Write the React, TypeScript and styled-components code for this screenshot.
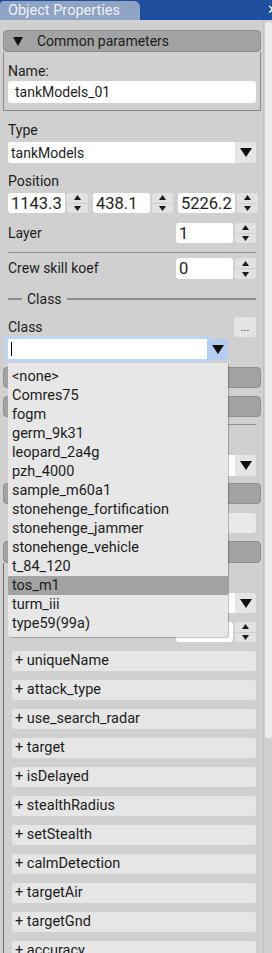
import React from "react";
import styled, { createGlobalStyle } from "styled-components";

const GlobalStyle = createGlobalStyle`
  html, body { margin: 0; padding: 0; background: #d0d0d0; }
  body { font-family: Roboto, "Liberation Sans", sans-serif; overflow: hidden; }
  * { box-sizing: border-box; }
`;

const Window = styled.div`
  width: 272px;
  height: 953px;
  display: flex;
  flex-direction: column;
  overflow: hidden;
  background: #d0d0d0;
  color: #1e1e1e;
  font-size: 14px;
`;

const TitleBar = styled.div`
  height: 20px;
  flex: none;
  background: #1f4e9c;
  display: flex;
  align-items: flex-end;
  justify-content: space-between;
  overflow: hidden;
`;

const Tab = styled.div`
  width: 140px;
  height: 19px;
  padding-left: 8px;
  background: #8fa3c4;
  border-radius: 4px 6px 0 0;
  color: #eef2f8;
  font-size: 14.5px;
  line-height: 19px;
`;

const Close = styled.span`
  align-self: center;
  color: #ffffff;
  font-size: 13px;
  line-height: 20px;
  margin-right: -6px;
`;

const Main = styled.div`
  flex: 1;
  display: flex;
  min-height: 0;
`;

const Content = styled.div`
  width: 263px;
  flex: none;
  padding: 10px 2px 0 3px;
  display: flex;
  flex-direction: column;
`;

const ScrollTrack = styled.div`
  flex: 1;
  border-left: 1px solid #c2c2c2;
  padding: 2px 0 0 1px;
  background: #d0d0d0;
`;

const ScrollThumb = styled.div`
  height: 716px;
  background: #ededed;
  border-radius: 2px;
`;

const GroupHeader = styled.div<{ $mt?: number; $h?: number }>`
  flex: none;
  height: ${(p) => p.$h ?? 21}px;
  margin-top: ${(p) => p.$mt ?? 0}px;
  background: #a2a2a2;
  border: 1px solid #8f8f8f;
  border-radius: 4px;
  display: flex;
  align-items: center;
  padding-left: 9px;
  gap: 14px;
  font-size: 14px;
  color: #1c1c1c;
`;

const GroupBody = styled.div`
  border: 1px solid #8a8a8a;
  border-top: none;
  padding: 10px 4px 7px;
`;

const OpenBody = styled.div`
  flex: 1;
  border-left: 1px solid #6e6e6e;
  padding: 0 5px 0 4px;
  display: flex;
  flex-direction: column;
`;

const Fields = styled.div`
  padding: 0 5px;
  display: flex;
  flex-direction: column;
`;

const Label = styled.div<{ $mt?: number }>`
  height: 19px;
  line-height: 19px;
  margin-top: ${(p) => p.$mt ?? 0}px;
  font-size: 14px;
  color: #1e1e1e;
  white-space: nowrap;
`;

const TextInput = styled.div<{ $mt?: number; $disabled?: boolean }>`
  height: ${(p) => (p.$disabled ? 20 : 22)}px;
  margin-top: ${(p) => p.$mt ?? 0}px;
  background: ${(p) => (p.$disabled ? "#e9e9e9" : "#ffffff")};
  border-radius: 3px;
  padding-left: 7px;
  line-height: 22px;
  font-size: 14px;
`;

const SelectBox = styled.div<{ $mt?: number; $h?: number }>`
  height: ${(p) => p.$h ?? 21}px;
  margin-top: ${(p) => p.$mt ?? 0}px;
  display: flex;
  border-radius: 3px;
  overflow: hidden;
`;

const SelectValue = styled.div`
  flex: 1;
  background: #ffffff;
  padding-left: 3px;
  font-size: 14px;
  display: flex;
  align-items: center;
`;

const ArrowBox = styled.div<{ $focus?: boolean }>`
  width: 21px;
  flex: none;
  background: ${(p) => (p.$focus ? "#b3cef2" : "#e5e5e5")};
  display: flex;
  align-items: center;
  justify-content: center;
`;

const Down = ({ w = 12, h = 9 }: { w?: number; h?: number }) => (
  <svg width={w} height={h} viewBox={`0 0 ${w} ${h}`}>
    <polygon points={`0,0 ${w},0 ${w / 2},${h}`} fill="#111" />
  </svg>
);

const SpinRowBox = styled.div<{ $mt?: number }>`
  margin-top: ${(p) => p.$mt ?? 0}px;
  display: flex;
  gap: 5px;
`;

const Spin = styled.div<{ $h?: number }>`
  display: flex;
  gap: 2px;
  height: ${(p) => p.$h ?? 20}px;
`;

const SpinInput = styled.div`
  width: 57px;
  background: #ffffff;
  border-radius: 3px;
  padding-left: 3px;
  font-size: 16.5px;
  display: flex;
  align-items: center;
`;

const SpinButtons = styled.div`
  width: 21px;
  display: flex;
  flex-direction: column;
  gap: 1px;
`;

const SpinHalf = styled.div<{ $up?: boolean }>`
  flex: 1;
  background: #e2e2e2;
  border-radius: ${(p) => (p.$up ? "3px 3px 0 0" : "0 0 3px 3px")};
  display: flex;
  align-items: center;
  justify-content: center;
`;

const Tri = ({ up }: { up?: boolean }) => (
  <svg width="7" height="5" viewBox="0 0 7 5">
    <polygon points={up ? "0,5 7,5 3.5,0" : "0,0 7,0 3.5,5"} fill="#1a1a1a" />
  </svg>
);

const SpinBox = ({ value, h }: { value: string; h?: number }) => (
  <Spin $h={h}>
    <SpinInput>{value}</SpinInput>
    <SpinButtons>
      <SpinHalf $up>
        <Tri up />
      </SpinHalf>
      <SpinHalf>
        <Tri />
      </SpinHalf>
    </SpinButtons>
  </Spin>
);

const Row = styled.div<{ $mt?: number; $h: number }>`
  margin-top: ${(p) => p.$mt ?? 0}px;
  height: ${(p) => p.$h}px;
  display: flex;
  align-items: center;
  justify-content: space-between;
`;

const Separator = styled.div<{ $mt?: number }>`
  margin-top: ${(p) => p.$mt ?? 0}px;
  height: 1px;
  background: #8f8f8f;
`;

const SectionTitle = styled.div<{ $mt?: number }>`
  margin-top: ${(p) => p.$mt ?? 0}px;
  height: 18px;
  display: flex;
  align-items: center;
  gap: 5px;
  font-size: 14px;
  &::before {
    content: "";
    width: 14px;
    height: 2px;
    background: #8c8c8c;
  }
  &::after {
    content: "";
    flex: 1;
    height: 2px;
    background: #8c8c8c;
  }
`;

const DotsButton = styled.div`
  width: 22px;
  height: 20px;
  background: #e4e4e4;
  border-radius: 3px;
  font-size: 11px;
  text-align: center;
  line-height: 22px;
  color: #333;
`;

const ComboWrap = styled.div<{ $mt?: number }>`
  position: relative;
  margin-top: ${(p) => p.$mt ?? 0}px;
  width: 220px;
  height: 21px;
  display: flex;
`;

const ComboField = styled.div`
  width: 199px;
  height: 20px;
  background: #ffffff;
  box-shadow: 0 0 0 3px #bfd7f6;
  display: flex;
  align-items: center;
  padding-left: 3px;
`;

const Caret = styled.span`
  width: 1px;
  height: 14px;
  background: #000;
`;

const ComboArrow = styled(ArrowBox)`
  position: relative;
  height: 21px;
`;

const DropList = styled.ul`
  position: absolute;
  z-index: 10;
  top: 24px;
  left: 0;
  width: 220px;
  height: 274px;
  margin: 0;
  padding: 4px 0 0;
  list-style: none;
  background: #e7e7e7;
  box-shadow: 1px 1px 1px rgba(0, 0, 0, 0.25);
  border-radius: 0 0 3px 3px;
`;

const DropItem = styled.li<{ $active?: boolean }>`
  height: 19px;
  line-height: 19px;
  padding-left: 4px;
  font-size: 14.5px;
  color: #1c1c1c;
  background: ${(p) => (p.$active ? "#a2a2a2" : "transparent")};
  white-space: nowrap;
`;

const PropItem = styled.div`
  flex: none;
  height: 20px;
  margin: 9px 0 0 4px;
  background: #e6e6e6;
  border-radius: 3px;
  padding-left: 3px;
  line-height: 20px;
  font-size: 14.5px;
  color: #1c1c1c;
  white-space: nowrap;
`;

const classes = [
  "<none>",
  "Comres75",
  "fogm",
  "germ_9k31",
  "leopard_2a4g",
  "pzh_4000",
  "sample_m60a1",
  "stonehenge_fortification",
  "stonehenge_jammer",
  "stonehenge_vehicle",
  "t_84_120",
  "tos_m1",
  "turm_iii",
  "type59(99a)",
];

const props = [
  "uniqueName",
  "attack_type",
  "use_search_radar",
  "target",
  "isDelayed",
  "stealthRadius",
  "setStealth",
  "calmDetection",
  "targetAir",
  "targetGnd",
  "accuracy",
];

export default function App() {
  return (
    <>
      <GlobalStyle />
      <Window>
        <TitleBar>
          <Tab>Object Properties</Tab>
          <Close>✕</Close>
        </TitleBar>
        <Main>
          <Content>
            <GroupHeader $h={22}>
              <Down w={10} h={9} />
              Common parameters
            </GroupHeader>
            <GroupBody>
              <Label>Name:</Label>
              <TextInput>tankModels_01</TextInput>
            </GroupBody>
            <Fields>
              <Label $mt={10}>Type</Label>
              <SelectBox $mt={2}>
                <SelectValue>tankModels</SelectValue>
                <ArrowBox>
                  <Down />
                </ArrowBox>
              </SelectBox>
              <Label $mt={9}>Position</Label>
              <SpinRowBox $mt={2}>
                <SpinBox value="1143.3" />
                <SpinBox value="438.1" />
                <SpinBox value="5226.2" />
              </SpinRowBox>
              <Row $mt={10} $h={20}>
                <Label>Layer</Label>
                <SpinBox value="1" />
              </Row>
              <Separator $mt={9} />
              <Row $mt={5} $h={21}>
                <Label>Crew skill koef</Label>
                <SpinBox value="0" h={21} />
              </Row>
              <SectionTitle $mt={11}>Class</SectionTitle>
              <Row $mt={9} $h={20}>
                <Label>Class</Label>
                <DotsButton>...</DotsButton>
              </Row>
              <ComboWrap $mt={2}>
                <ComboField>
                  <Caret />
                </ComboField>
                <ComboArrow $focus>
                  <Down />
                </ComboArrow>
                <DropList>
                  {classes.map((c) => (
                    <DropItem key={c} $active={c === "tos_m1"}>
                      {c}
                    </DropItem>
                  ))}
                </DropList>
              </ComboWrap>
            </Fields>
            <GroupHeader $mt={7} />
            <GroupHeader $mt={8} />
            <Fields>
              <Separator $mt={7} />
              <SelectBox $mt={30}>
                <SelectValue />
                <ArrowBox>
                  <Down />
                </ArrowBox>
              </SelectBox>
            </Fields>
            <GroupHeader $mt={7} />
            <Fields>
              <TextInput $mt={9} $disabled />
            </Fields>
            <GroupHeader $mt={8} $h={22} />
            <OpenBody>
              <SelectBox $mt={30} $h={20}>
                <SelectValue />
                <ArrowBox>
                  <Down />
                </ArrowBox>
              </SelectBox>
              <Row $mt={9} $h={20}>
                <span />
                <SpinBox value="" />
              </Row>
              {props.map((p) => (
                <PropItem key={p}>+ {p}</PropItem>
              ))}
            </OpenBody>
          </Content>
          <ScrollTrack>
            <ScrollThumb />
          </ScrollTrack>
        </Main>
      </Window>
    </>
  );
}
